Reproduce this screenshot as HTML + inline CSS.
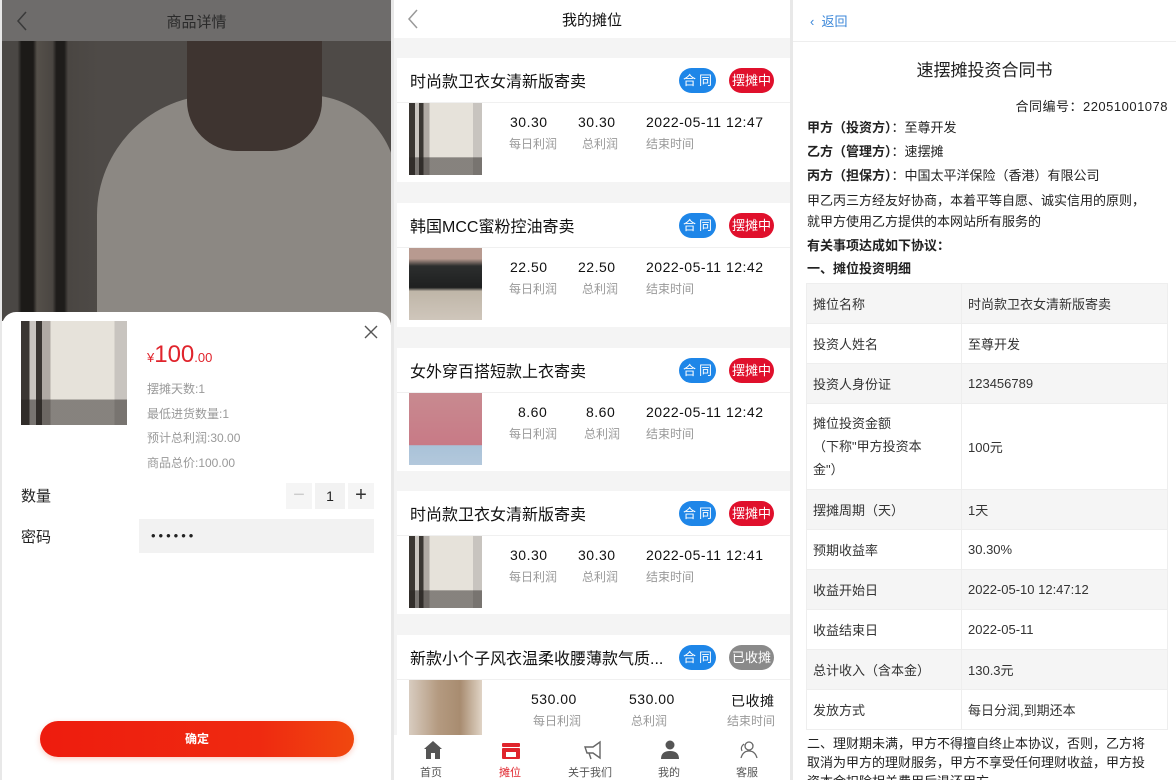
<!DOCTYPE html>
<html><head><meta charset="utf-8"><style>
*{margin:0;padding:0;box-sizing:border-box}
body{width:1176px;height:780px;position:relative;overflow:hidden;background:#e8e8e8;font-family:"Liberation Sans","Noto Sans CJK SC",sans-serif;color:#222}
.a{position:absolute}
.p{position:absolute;overflow:hidden}
.cloth{background:linear-gradient(180deg,transparent 0,transparent 75%,rgba(40,36,34,.5) 76%,rgba(40,36,34,.5) 100%),linear-gradient(90deg,#3a3632 0 8%,#c9c5c0 8% 14%,#3a3632 14% 20%,#b0aaa4 20% 28%,#e6e2da 28% 88%,#c8c4bf 88%)}
.card{position:absolute;left:3px;width:394px;background:#fff}
.card .t{position:absolute;left:13px;top:10px;font-size:16px;color:#111}
.card .hl{position:absolute;left:0;right:0;top:44px;border-top:1px solid #f0f0f0}
.bd{position:absolute;top:10px;height:25px;border-radius:13px;color:#fff;font-size:13px;text-align:center;line-height:25px}
.b1{left:282px;width:37px;background:#1e86e8;letter-spacing:3px;padding-left:3px}
.b2{left:332px;width:45px;background:#e0102c}
.b3{left:332px;width:45px;background:#8a8a8a}
.th{position:absolute;left:12px;top:45px;width:73px;height:72px}
.v{position:absolute;top:56px;font-size:14px;color:#111;text-align:center;letter-spacing:.5px}
.l{position:absolute;top:77px;font-size:12px;color:#999}
td{border:1px solid #eee;padding:0 6px;font-size:13px;color:#333;height:40px}
tr:nth-child(odd) td{background:#f5f5f5}
</style></head><body>

<!-- panel 1 -->
<div class="p" style="left:2px;top:0;width:389px;height:780px;background:#fff">
 <div class="a" style="left:0;top:0;width:389px;height:41px;background:#6e6c6b"></div>
 <svg class="a" style="left:14px;top:11px" width="12" height="20"><path d="M10 1 L2 10 L10 19" fill="none" stroke="#3a3a3a" stroke-width="1.5"/></svg>
 <div class="a" style="left:0;top:11px;width:389px;text-align:center;font-size:15px;color:#2a2a2a">商品详情</div>
 <div class="a" style="left:0;top:41px;width:389px;height:280px;background:linear-gradient(90deg,#4a4744 0,#4a4744 4%,#1c1a18 5%,#1c1a18 8%,#55504a 9%,#4a4642 13%,#1e1c1a 14%,#1e1c1a 16%,#4a4642 17%,#4e4a47 25%,#4e4a47 100%)"></div>
 <div class="a" style="left:95px;top:95px;width:300px;height:230px;background:#8c8883;border-radius:120px 90px 0 0"></div>
 <div class="a" style="left:185px;top:41px;width:135px;height:110px;background:#3e3430;border-radius:0 0 50px 50px"></div>
 <div class="a" style="left:0;top:312px;width:389px;height:470px;background:#fff;border-radius:14px 14px 0 0"></div>
 <div class="a cloth" style="left:19px;top:321px;width:106px;height:104px"></div>
 <svg class="a" style="left:362px;top:325px" width="14" height="14"><path d="M1 1 L13 13 M13 1 L1 13" stroke="#555" stroke-width="1.4"/></svg>
 <div class="a" style="left:145px;top:341px;color:#e0242c"><span style="font-size:13px">¥</span><span style="font-size:24px">100</span><span style="font-size:13px">.00</span></div>
 <div class="a" style="left:145px;top:377px;font-size:12px;color:#999;line-height:24.5px">摆摊天数:1<br>最低进货数量:1<br>预计总利润:30.00<br>商品总价:100.00</div>
 <div class="a" style="left:19px;top:485px;font-size:15px;color:#222">数量</div>
 <div class="a" style="left:284px;top:483px;width:26px;height:26px;background:#f5f5f5;color:#ccc;text-align:center;line-height:24px;font-size:20px">−</div>
 <div class="a" style="left:313px;top:483px;width:30px;height:26px;background:#f2f2f2;text-align:center;line-height:26px;font-size:14px">1</div>
 <div class="a" style="left:346px;top:483px;width:26px;height:26px;background:#f5f5f5;color:#333;text-align:center;line-height:24px;font-size:20px">+</div>
 <div class="a" style="left:19px;top:526px;font-size:15px;color:#222">密码</div>
 <div class="a" style="left:137px;top:519px;width:235px;height:34px;background:#f2f2f2;padding-left:12px;line-height:34px;font-size:13px;letter-spacing:3px">••••••</div>
 <div class="a" style="left:38px;top:721px;width:314px;height:36px;border-radius:18px;background:linear-gradient(90deg,#ee1c0e,#ef2a10 70%,#f0480f);color:#fff;font-weight:bold;font-size:12px;text-align:center;line-height:36px;box-shadow:0 2px 6px rgba(240,60,20,.25)">确定</div>
</div>

<!-- panel 2 -->
<div class="p" style="left:394px;top:0;width:396px;height:780px;background:#f4f4f4">
 <div class="a" style="left:0;top:0;width:396px;height:38px;background:#fff"></div>
 <svg class="a" style="left:13px;top:9px" width="12" height="20"><path d="M10 1 L2 10 L10 19" fill="none" stroke="#999" stroke-width="1.5"/></svg>
 <div class="a" style="left:0;top:9px;width:396px;text-align:center;font-size:15px;color:#111">我的摊位</div>

 <div class="card" style="top:58px;height:124px"><div class="t">时尚款卫衣女清新版寄卖</div><div class="bd b1">合同</div><div class="bd b2">摆摊中</div><div class="hl"></div><div class="th cloth"></div>
  <div class="v" style="left:113px">30.30</div><div class="v" style="left:181px">30.30</div><div class="v" style="left:249px">2022-05-11 12:47</div>
  <div class="l" style="left:112px">每日利润</div><div class="l" style="left:185px">总利润</div><div class="l" style="left:249px">结束时间</div></div>

 <div class="card" style="top:203px;height:124px"><div class="t">韩国MCC蜜粉控油寄卖</div><div class="bd b1">合同</div><div class="bd b2">摆摊中</div><div class="hl"></div><div class="th" style="background:linear-gradient(180deg,#b89a90 0,#b89a90 15%,#2c2e2e 25%,#1e2020 55%,#bfb6a8 60%,#cfc6bb 100%)"></div>
  <div class="v" style="left:113px">22.50</div><div class="v" style="left:181px">22.50</div><div class="v" style="left:249px">2022-05-11 12:42</div>
  <div class="l" style="left:112px">每日利润</div><div class="l" style="left:185px">总利润</div><div class="l" style="left:249px">结束时间</div></div>

 <div class="card" style="top:348px;height:123px"><div class="t">女外穿百搭短款上衣寄卖</div><div class="bd b1">合同</div><div class="bd b2">摆摊中</div><div class="hl"></div><div class="th" style="background:linear-gradient(180deg,#c88a90 0,#c87a86 72%,#a9c2d8 73%,#b3c8dc 100%)"></div>
  <div class="v" style="left:121px">8.60</div><div class="v" style="left:189px">8.60</div><div class="v" style="left:249px">2022-05-11 12:42</div>
  <div class="l" style="left:112px">每日利润</div><div class="l" style="left:187px">总利润</div><div class="l" style="left:249px">结束时间</div></div>

 <div class="card" style="top:491px;height:123px"><div class="t">时尚款卫衣女清新版寄卖</div><div class="bd b1">合同</div><div class="bd b2">摆摊中</div><div class="hl"></div><div class="th cloth"></div>
  <div class="v" style="left:113px">30.30</div><div class="v" style="left:181px">30.30</div><div class="v" style="left:249px">2022-05-11 12:41</div>
  <div class="l" style="left:112px">每日利润</div><div class="l" style="left:185px">总利润</div><div class="l" style="left:249px">结束时间</div></div>

 <div class="card" style="top:635px;height:123px"><div class="t">新款小个子风衣温柔收腰薄款气质...</div><div class="bd b1">合同</div><div class="bd b3">已收摊</div><div class="hl"></div><div class="th" style="background:linear-gradient(90deg,#d8ccc0,#b49a80 40%,#a88c70 70%,#e0d4c6)"></div>
  <div class="v" style="left:134px">530.00</div><div class="v" style="left:232px">530.00</div><div class="v" style="left:334px">已收摊</div>
  <div class="l" style="left:136px">每日利润</div><div class="l" style="left:234px">总利润</div><div class="l" style="left:330px">结束时间</div></div>

 <div class="a" style="left:0;top:735px;width:396px;height:45px;background:#fff"></div>
 <svg class="a" style="left:0;top:740px" width="396" height="22">
  <path d="M30 9 L39 1 L48 9 L46 9 L46 19 L41 19 L41 13 L37 13 L37 19 L32 19 L32 9 Z" fill="#555"/>
  <rect x="108" y="3" width="18" height="4" rx="1" fill="#e0242c"/><rect x="108" y="8" width="18" height="11" rx="1" fill="#e0242c"/><rect x="112" y="12" width="10" height="5" fill="#fff"/>
  <path d="M191 7 L199 7 L206 2 L206 18 L199 13 L193 13 Z M195 13 L197 19" fill="none" stroke="#666" stroke-width="1.4"/>
  <circle cx="276" cy="5" r="4.5" fill="#555"/><path d="M267 19 Q267 11 276 11 Q285 11 285 19 Z" fill="#555"/>
  <circle cx="355" cy="6" r="4" fill="none" stroke="#666" stroke-width="1.3"/><path d="M347 18 Q349 11 355 11 Q361 11 363 18" fill="none" stroke="#666" stroke-width="1.3"/><path d="M350 4 Q346 7 348 11" fill="none" stroke="#666" stroke-width="1.2"/>
 </svg>
 <div class="a" style="left:0;top:764px;width:396px;font-size:11px;color:#555">
  <span class="a" style="left:26px">首页</span><span class="a" style="left:105px;color:#e0242c">摊位</span><span class="a" style="left:174px">关于我们</span><span class="a" style="left:264px">我的</span><span class="a" style="left:342px">客服</span></div>
</div>

<!-- panel 3 -->
<div class="p" style="left:793px;top:0;width:383px;height:780px;background:#fff">
 <div class="a" style="left:17px;top:11px;font-size:13px;color:#3a86d8">&#x2039;&nbsp; 返回</div>
 <div class="a" style="left:0;top:41px;width:383px;border-top:1px solid #eee"></div>
 <div class="a" style="left:0;top:56px;width:383px;text-align:center;font-size:17px;color:#222">速摆摊投资合同书</div>
 <div class="a" style="right:8px;top:96px;font-size:13px;color:#222;letter-spacing:.5px">合同编号：22051001078</div>
 <div class="a" style="left:14px;top:116px;font-size:13px;color:#222;line-height:24px;width:362px">
  <b>甲方（投资方）</b>：至尊开发<br><b>乙方（管理方）</b>：速摆摊<br><b>丙方（担保方）</b>：中国太平洋保险（香港）有限公司</div>
 <div class="a" style="left:14px;top:190px;font-size:13px;color:#222;line-height:21px;width:370px;white-space:nowrap">甲乙丙三方经友好协商，本着平等自愿、诚实信用的原则，<br>就甲方使用乙方提供的本网站所有服务的</div>
 <div class="a" style="left:14px;top:234px;font-size:13px;color:#222;line-height:23px;font-weight:bold">有关事项达成如下协议：<br><span style="font-weight:bold">一、摊位投资明细</span></div>
 <table class="a" style="left:13px;top:283px;width:362px;border-collapse:collapse">
  <tr><td style="width:155px">摊位名称</td><td>时尚款卫衣女清新版寄卖</td></tr>
  <tr><td>投资人姓名</td><td>至尊开发</td></tr>
  <tr><td>投资人身份证</td><td>123456789</td></tr>
  <tr><td style="height:86px;line-height:23px;background:#fff">摊位投资金额<br>（下称"甲方投资本<br>金"）</td><td style="background:#fff">100元</td></tr>
  <tr><td style="background:#f5f5f5">摆摊周期（天）</td><td style="background:#f5f5f5">1天</td></tr>
  <tr><td style="background:#fff">预期收益率</td><td style="background:#fff">30.30%</td></tr>
  <tr><td style="background:#f5f5f5">收益开始日</td><td style="background:#f5f5f5">2022-05-10 12:47:12</td></tr>
  <tr><td style="background:#fff">收益结束日</td><td style="background:#fff">2022-05-11</td></tr>
  <tr><td style="background:#f5f5f5">总计收入（含本金）</td><td style="background:#f5f5f5">130.3元</td></tr>
  <tr><td style="background:#fff">发放方式</td><td style="background:#fff">每日分润,到期还本</td></tr>
 </table>
 <div class="a" style="left:14px;top:734px;font-size:13px;color:#222;line-height:19px;width:370px;white-space:nowrap">二、理财期未满，甲方不得擅自终止本协议，否则，乙方将<br>取消为甲方的理财服务，甲方不享受任何理财收益，甲方投<br>资本金扣除相关费用后退还甲方。</div>
</div>
</body></html>
